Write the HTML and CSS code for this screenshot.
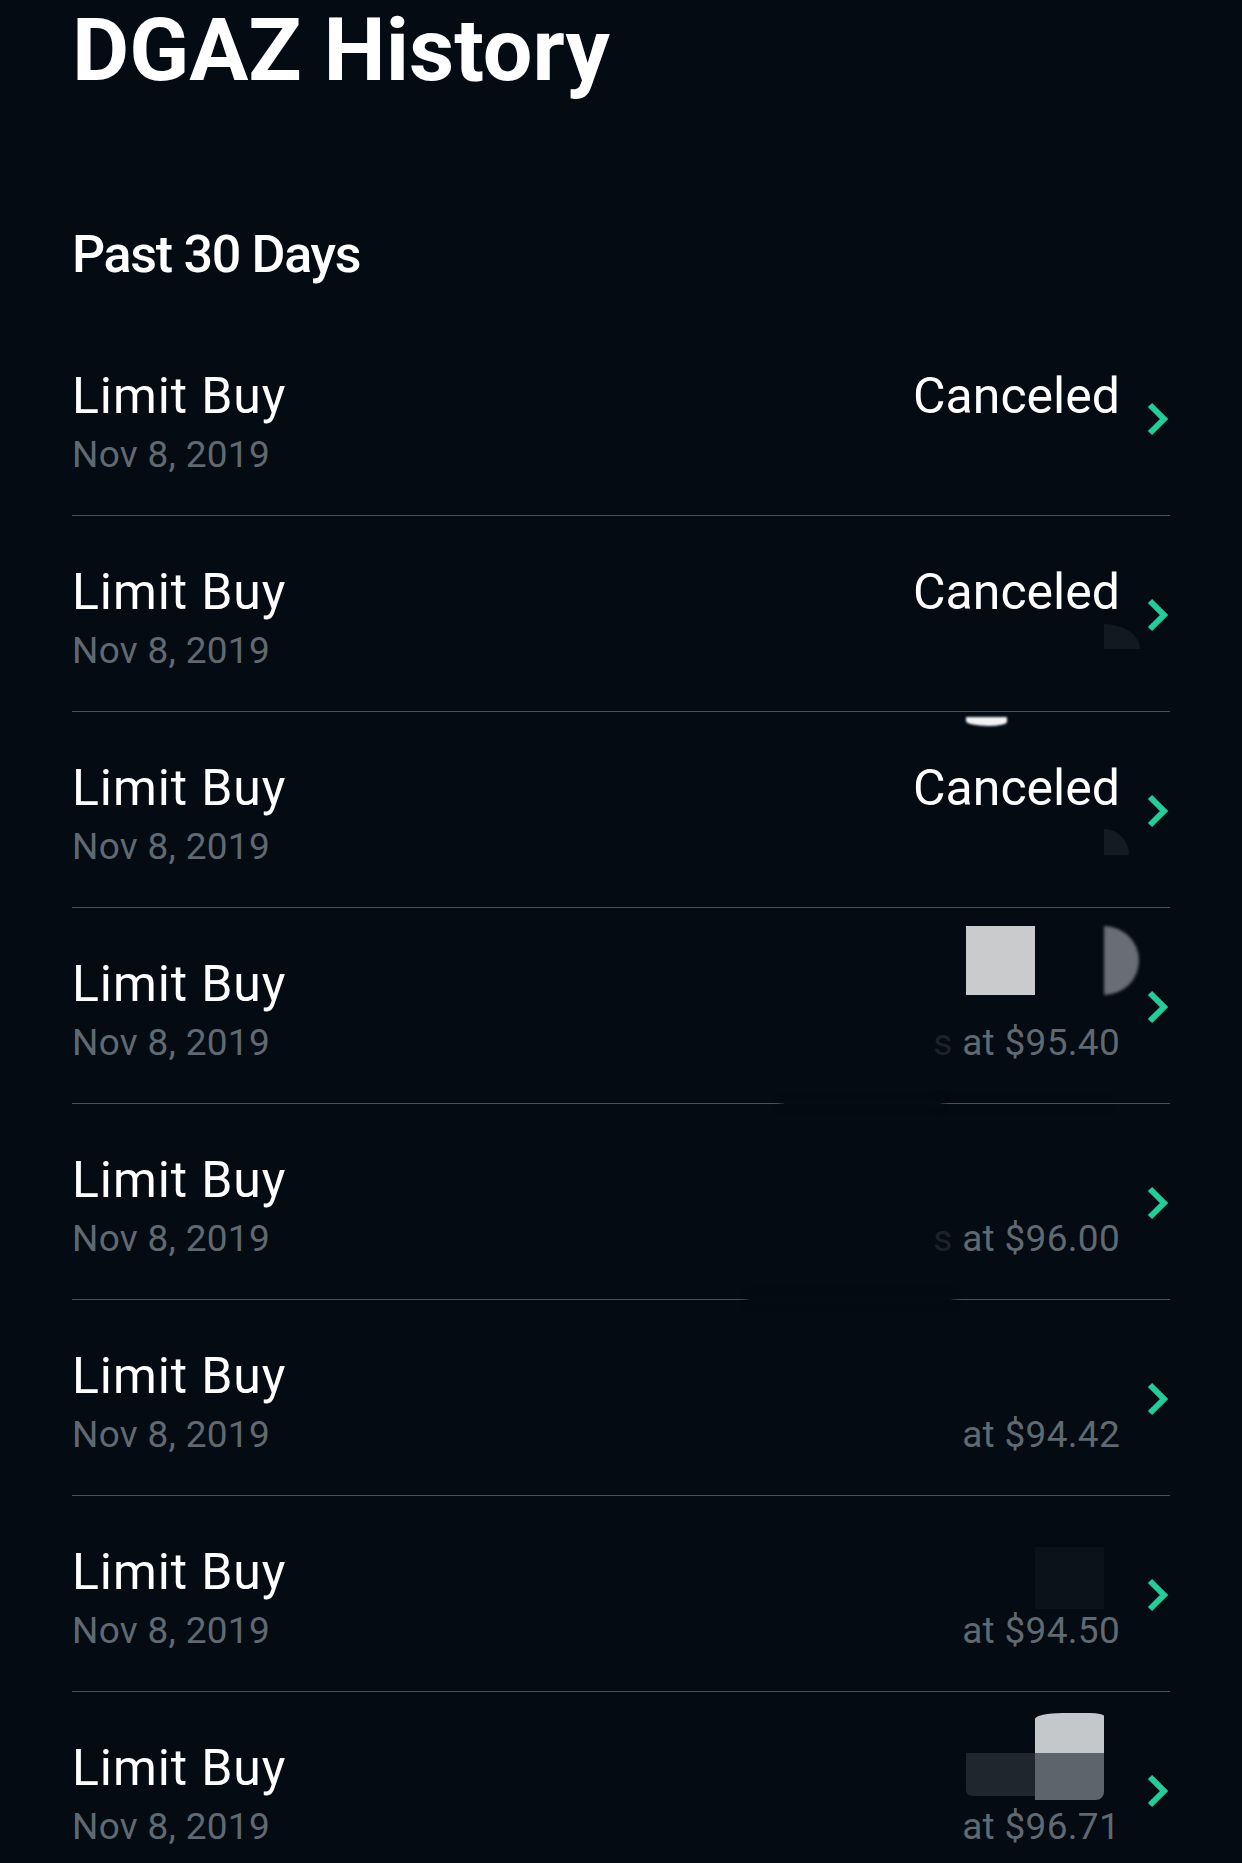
FILE: index.html
```html
<!DOCTYPE html>
<html lang="en">
<head>
  <meta charset="UTF-8" />
  <meta name="viewport" content="width=device-width, initial-scale=1.0" />
  <title>DGAZ History</title>
  <link rel="stylesheet" href="styles.css">
</head>
<body>
  <div class="page">
    <h1 class="title">DGAZ History</h1>
    <h2 class="section">Past 30 Days</h2>

    <div class="list">
      <div class="row">
        <div class="left">
          <div class="kind">Limit Buy</div>
          <div class="date">Nov 8, 2019</div>
        </div>
        <div class="right">
          <div class="status">Canceled</div>
          <div class="sub"></div>
        </div>
        <svg class="chev" viewBox="0 0 24 34"><polyline points="4,3 18,17 4,31" /></svg>
      </div>

      <div class="row">
        <div class="left">
          <div class="kind">Limit Buy</div>
          <div class="date">Nov 8, 2019</div>
        </div>
        <div class="right">
          <div class="status">Canceled</div>
          <div class="sub"></div>
        </div>
        <svg class="chev" viewBox="0 0 24 34"><polyline points="4,3 18,17 4,31" /></svg>
        <div class="mask faint-a"></div>
      </div>

      <div class="row">
        <div class="left">
          <div class="kind">Limit Buy</div>
          <div class="date">Nov 8, 2019</div>
        </div>
        <div class="right">
          <div class="status">Canceled</div>
          <div class="sub"></div>
        </div>
        <svg class="chev" viewBox="0 0 24 34"><polyline points="4,3 18,17 4,31" /></svg>
        <div class="mask blob"></div>
        <div class="mask faint-b"></div>
        <div class="smudge gap-a"></div>
      </div>

      <div class="row">
        <div class="left">
          <div class="kind">Limit Buy</div>
          <div class="date">Nov 8, 2019</div>
        </div>
        <div class="right">
          <div class="status"></div>
          <div class="sub"><span class="dim">s</span> at $95.40</div>
        </div>
        <svg class="chev" viewBox="0 0 24 34"><polyline points="4,3 18,17 4,31" /></svg>
        <div class="mask light-sq"></div>
        <div class="mask half-disk"></div>
        <div class="smudge gap-b"></div>
      </div>

      <div class="row">
        <div class="left">
          <div class="kind">Limit Buy</div>
          <div class="date">Nov 8, 2019</div>
        </div>
        <div class="right">
          <div class="status"></div>
          <div class="sub"><span class="dim">s</span> at $96.00</div>
        </div>
        <svg class="chev" viewBox="0 0 24 34"><polyline points="4,3 18,17 4,31" /></svg>
        <div class="smudge gap-c"></div>
      </div>

      <div class="row">
        <div class="left">
          <div class="kind">Limit Buy</div>
          <div class="date">Nov 8, 2019</div>
        </div>
        <div class="right">
          <div class="status"></div>
          <div class="sub">at $94.42</div>
        </div>
        <svg class="chev" viewBox="0 0 24 34"><polyline points="4,3 18,17 4,31" /></svg>
      </div>

      <div class="row">
        <div class="left">
          <div class="kind">Limit Buy</div>
          <div class="date">Nov 8, 2019</div>
        </div>
        <div class="right">
          <div class="status"></div>
          <div class="sub">at $94.50</div>
        </div>
        <svg class="chev" viewBox="0 0 24 34"><polyline points="4,3 18,17 4,31" /></svg>
        <div class="mask faint-c"></div>
      </div>

      <div class="row">
        <div class="left">
          <div class="kind">Limit Buy</div>
          <div class="date">Nov 8, 2019</div>
        </div>
        <div class="right">
          <div class="status"></div>
          <div class="sub">at $96.71</div>
        </div>
        <svg class="chev" viewBox="0 0 24 34"><polyline points="4,3 18,17 4,31" /></svg>
        <div class="mask top-light"></div>
        <div class="mask low-dark"></div>
        <div class="mask low-mid"></div>
      </div>
    </div>
  </div>
</body>
</html>
```

FILE: styles.css
```css
body {
  margin: 0;
  background-color: #040b13;
  color: #ffffff;
  font-family: Roboto, "Noto Sans", sans-serif;
}
.page {
  padding: 0 72px;
}
.title {
  margin: 6px 0 0 0;
  font-size: 88px;
  line-height: 88px;
  font-weight: 700;
}
.section {
  margin: 131px 0 0 0;
  font-size: 52px;
  line-height: 60px;
  font-weight: 500;
  letter-spacing: -1.3px;
}
.list {
  margin-top: 35px;
}
.row {
  position: relative;
  display: flex;
  height: 196px;
  box-sizing: border-box;
  padding-top: 46px;
  border-bottom: 1px solid #4a5159;
}
.left {
  flex: 1;
}
.right {
  text-align: right;
}
.kind, .status {
  font-size: 50px;
  line-height: 60px;
  height: 60px;
  font-weight: 400;
}
.kind {
  letter-spacing: 0.9px;
}
.date, .sub {
  margin-top: 7px;
  font-size: 37px;
  line-height: 44px;
  height: 44px;
  font-weight: 400;
  letter-spacing: 0.3px;
  color: #5f6971;
}
.dim {
  color: #1c2328;
}
.chev {
  width: 24px;
  height: 34px;
  margin: 36px 0 0 26px;
  fill: none;
  stroke: #23cc98;
  stroke-width: 6;
  stroke-linejoin: miter;
}

/* redaction leftovers over the right column */
.mask {
  position: absolute;
}
.light-sq {
  top: 18px;
  right: 135px;
  width: 69px;
  height: 69px;
  background: #c9cbcd;
}
.half-disk {
  top: 18px;
  right: 31px;
  width: 35px;
  height: 69px;
  background: #686e73;
  border-radius: 0 35px 35px 0 / 0 50% 50% 0;
  filter: blur(1.5px);
}
.faint-a {
  top: 108px;
  right: 30px;
  width: 36px;
  height: 25px;
  background: #131920;
  border-top-right-radius: 100%;
}
.faint-b {
  top: 117px;
  right: 41px;
  width: 25px;
  height: 26px;
  background: #151b22;
  border-top-right-radius: 100%;
}
.blob {
  top: 5px;
  right: 163px;
  width: 41px;
  height: 9px;
  background: #f2f2f2;
  border-radius: 0 0 50% 60%;
  filter: blur(0.8px);
}
.faint-c {
  top: 51px;
  right: 66px;
  width: 69px;
  height: 62px;
  background: #0b1219;
}
.top-light {
  top: 21px;
  right: 66px;
  width: 69px;
  height: 40px;
  background: #c5c8ca;
  border-radius: 40% 20% 0 0 / 6px 3px 0 0;
}
.low-dark {
  top: 61px;
  right: 135px;
  width: 69px;
  height: 43px;
  background: #1f262c;
  border-radius: 0 0 0 6px;
}
.low-mid {
  top: 61px;
  right: 66px;
  width: 69px;
  height: 47px;
  background: #5b656b;
  border-radius: 0 0 8px 0;
}
.smudge {
  position: absolute;
  bottom: -2px;
  height: 4px;
  background: #040b13;
  box-shadow: 0 0 6px 3px #040b13;
}
.gap-a {
  right: 67px;
  width: 160px;
  bottom: -198px;
}
.gap-b {
  right: 230px;
  width: 156px;
}
.gap-c {
  right: 219px;
  width: 202px;
}
```
